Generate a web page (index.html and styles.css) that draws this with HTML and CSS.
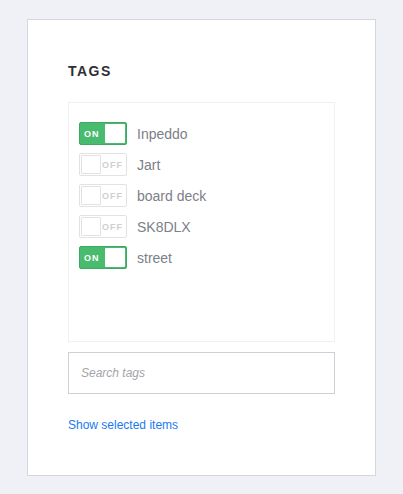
FILE: index.html
```html
<!DOCTYPE html>
<html>
<head>
<meta charset="utf-8">
<link rel="stylesheet" href="styles.css">
</head>
<body>
<div class="card">
  <h2 class="title">TAGS</h2>
  <div class="tag-list">
    <div class="tag-row"><span class="toggle on"><span class="t-text">ON</span><span class="knob"></span></span><span class="label">Inpeddo</span></div>
    <div class="tag-row"><span class="toggle off"><span class="knob"></span><span class="t-text">OFF</span></span><span class="label">Jart</span></div>
    <div class="tag-row"><span class="toggle off"><span class="knob"></span><span class="t-text">OFF</span></span><span class="label">board deck</span></div>
    <div class="tag-row"><span class="toggle off"><span class="knob"></span><span class="t-text">OFF</span></span><span class="label">SK8DLX</span></div>
    <div class="tag-row"><span class="toggle on"><span class="t-text">ON</span><span class="knob"></span></span><span class="label">street</span></div>
  </div>
  <input class="search" type="text" placeholder="Search tags">
  <a class="show-link" href="#">Show selected items</a>
</div>
</body>
</html>
```
FILE: styles.css
```css
html, body {
  margin: 0;
  padding: 0;
}
body {
  background: #f0f1f6;
  font-family: "Liberation Sans", Arial, sans-serif;
  padding: 19px 0 0 27px;
  height: 494px;
  box-sizing: border-box;
}
.card {
  width: 349px;
  height: 457px;
  box-sizing: border-box;
  background: #fff;
  border: 1px solid #d6d7db;
  padding: 43px 40px 0 40px;
  display: flex;
  flex-direction: column;
}
.title {
  margin: 0;
  font-size: 14px;
  line-height: 16px;
  font-weight: bold;
  letter-spacing: 1.5px;
  color: #2f3033;
}
.tag-list {
  margin-top: 23px;
  height: 240px;
  box-sizing: border-box;
  border: 1px solid #f0f0f0;
  padding: 19px 10px 0 10px;
  display: flex;
  flex-direction: column;
  gap: 8px;
}
.tag-row {
  display: flex;
  align-items: center;
  height: 23px;
}
.toggle {
  width: 48px;
  height: 23px;
  box-sizing: border-box;
  border-radius: 2px;
  display: flex;
  align-items: center;
  padding: 1px;
  flex-shrink: 0;
}
.toggle.on {
  background: #48bb6e;
  border: 1px solid #3da862;
}
.toggle.off {
  background: #fff;
  border: 1px solid #e2e2e2;
}
.knob {
  width: 20px;
  height: 19px;
  box-sizing: border-box;
  background: #fff;
  border-radius: 1px;
}
.toggle.off .knob {
  border: 1px solid #e2e2e2;
}
.t-text {
  flex: 1;
  font-size: 9px;
  font-weight: bold;
  letter-spacing: 1px;
}
.toggle.on .t-text {
  color: #fff;
  padding-left: 3px;
}
.toggle.off .t-text {
  color: #cfcfcf;
  padding-left: 1px;
}
.label {
  margin-left: 10px;
  font-size: 14px;
  color: #7c8089;
}
.search {
  margin-top: 10px;
  height: 42px;
  width: 100%;
  box-sizing: border-box;
  border: 1px solid #cdd0d6;
  border-radius: 0;
  padding: 0 12px;
  font-family: "Liberation Sans", Arial, sans-serif;
  font-size: 12px;
  font-style: italic;
  outline: none;
}
.search::placeholder {
  color: #a2a4a8;
}
.show-link {
  margin-top: 24px;
  font-size: 12px;
  line-height: 14px;
  color: #1a7af0;
  text-decoration: none;
  align-self: flex-start;
}
```
